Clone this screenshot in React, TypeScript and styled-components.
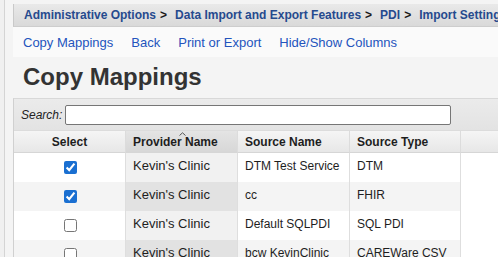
import React from "react";
import styled, { createGlobalStyle } from "styled-components";

interface Mapping {
  id: number;
  selected: boolean;
  provider: string;
  sourceName: string;
  sourceType: string;
}

const mappings: Mapping[] = [
  { id: 1, selected: true, provider: "Kevin's Clinic", sourceName: "DTM Test Service", sourceType: "DTM" },
  { id: 2, selected: true, provider: "Kevin's Clinic", sourceName: "cc", sourceType: "FHIR" },
  { id: 3, selected: false, provider: "Kevin's Clinic", sourceName: "Default SQLPDI", sourceType: "SQL PDI" },
  { id: 4, selected: false, provider: "Kevin's Clinic", sourceName: "bcw KevinClinic", sourceType: "CAREWare CSV" },
];

const crumbs = ["Administrative Options", "Data Import and Export Features", "PDI", "Import Settings"];
const actions = ["Copy Mappings", "Back", "Print or Export", "Hide/Show Columns"];

export default function App() {
  return (
    <>
      <GlobalStyle />
      <Page>
        <Breadcrumb>
          {crumbs.map((c, i) => (
            <React.Fragment key={c}>
              <Crumb>{c}</Crumb>
              {i < crumbs.length - 1 && <Sep>&gt;</Sep>}
            </React.Fragment>
          ))}
        </Breadcrumb>
        <Actions>
          {actions.map((a) => (
            <ActionLink key={a} href="#">
              {a}
            </ActionLink>
          ))}
        </Actions>
        <Title>Copy Mappings</Title>
        <SearchBar>
          <SearchLabel>Search:</SearchLabel>
          <SearchInput type="text" />
        </SearchBar>
        <Grid>
          <colgroup>
            <col style={{ width: 112 }} />
            <col style={{ width: 112 }} />
            <col style={{ width: 112 }} />
            <col style={{ width: 111 }} />
            <col />
          </colgroup>
          <thead>
            <tr>
              <Th $center>Select</Th>
              <Th $sorted>
                <SortCaret width="7" height="4" viewBox="0 0 7 4">
                  <path d="M0.5 3.5 L3.5 0.8 L6.5 3.5" fill="none" stroke="#555" strokeWidth="1" />
                </SortCaret>
                Provider Name
              </Th>
              <Th>Source Name</Th>
              <Th>Source Type</Th>
              <Th />
            </tr>
          </thead>
          <tbody>
            {mappings.map((m, i) => (
              <tr key={m.id}>
                <Td $even={i % 2 === 1} $center>
                  <Check type="checkbox" defaultChecked={m.selected} />
                </Td>
                <Td $even={i % 2 === 1} $sorted>
                  {m.provider}
                </Td>
                <Td $even={i % 2 === 1}>{m.sourceName}</Td>
                <Td $even={i % 2 === 1}>{m.sourceType}</Td>
                <Filler />
              </tr>
            ))}
          </tbody>
        </Grid>
      </Page>
    </>
  );
}

//  styling
const GlobalStyle = createGlobalStyle`
  *, *::before, *::after { box-sizing: border-box; }
  html, body {
    margin: 0;
    overflow: hidden;
    background: #f0f0f0;
    font-family: "Liberation Sans", Arial, sans-serif;
  }
`;

const Page = styled.div`
  margin-left: 4px;
  min-height: 100vh;
  padding: 4px 0 0 8px;
  border-left: 1px solid #d4d4d4;
  background: #f4f4f4;
`;

const Breadcrumb = styled.div`
  display: flex;
  align-items: center;
  height: 23px;
  padding-left: 10px;
  white-space: nowrap;
  overflow: hidden;
  background: linear-gradient(#e9e9e9, #d9d9d9);
  border-left: 1px solid #c9c9c9;
  border-bottom: 1px solid #cdcdcd;
  font-size: 12px;
  font-weight: bold;
`;

const Crumb = styled.span`
  color: #264a8e;
`;

const Sep = styled.span`
  color: #1a1a1a;
  margin: 0 8px 0 4px;
`;

const Actions = styled.nav`
  display: flex;
  align-items: center;
  gap: 18px;
  height: 30px;
  padding-left: 10px;
  background: #fafafa;
`;

const ActionLink = styled.a`
  font-size: 13px;
  color: #2354bd;
  text-decoration: none;
`;

const Title = styled.h1`
  margin: 0;
  padding: 6px 0 7px 10px;
  font-size: 24px;
  line-height: 28px;
  font-weight: bold;
  color: #333;
`;

const SearchBar = styled.div`
  display: flex;
  align-items: center;
  height: 32px;
  padding-left: 7px;
  background: linear-gradient(#ebebeb, #e3e3e3);
  border-top: 1px solid #d8d8d8;
  border-left: 1px solid #d0d0d0;
`;

const SearchLabel = styled.label`
  font-size: 12px;
  font-style: italic;
  color: #222;
  margin-right: 3px;
`;

const SearchInput = styled.input`
  width: 386px;
  height: 20px;
  border: 1px solid #767676;
  border-radius: 2px;
  background: #fff;
  outline: none;
`;

const Grid = styled.table`
  width: calc(100% + 40px);
  table-layout: fixed;
  border-collapse: separate;
  border-spacing: 0;
  border-left: 1px solid #d0d0d0;
  background: #fff;
`;

const Th = styled.th<{ $sorted?: boolean; $center?: boolean }>`
  position: relative;
  height: 23px;
  padding: 0 7px;
  font-size: 12px;
  font-weight: bold;
  color: #1e1e1e;
  text-align: ${(p) => (p.$center ? "center" : "left")};
  background: ${(p) =>
    p.$sorted ? "linear-gradient(#e4e4e4, #d7d7d7)" : "linear-gradient(#f5f5f5, #e7e7e7)"};
  border-top: 1px solid #dcdcdc;
  border-right: 1px solid #dcdcdc;
  border-bottom: 1px solid #d6d6d6;
`;

const SortCaret = styled.svg`
  position: absolute;
  top: 1px;
  left: 50%;
  margin-left: -3px;
`;

const Td = styled.td<{ $even?: boolean; $sorted?: boolean; $center?: boolean }>`
  height: 29px;
  padding: 5px 7px;
  vertical-align: top;
  font-size: ${(p) => (p.$sorted ? "13px" : "12px")};
  line-height: 16px;
  color: #1e1e1e;
  text-align: ${(p) => (p.$center ? "center" : "left")};
  border-right: 1px solid #dedede;
  background: ${(p) =>
    p.$sorted ? (p.$even ? "#e2e2e2" : "#f1f1f1") : p.$even ? "#f4f4f4" : "#fff"};
`;

const Filler = styled.td`
  background: #fff;
`;

const Check = styled.input`
  margin: 3px 3px 3px 4px;
  width: 13px;
  height: 13px;
  accent-color: #1a6fd1;
  vertical-align: top;
`;
